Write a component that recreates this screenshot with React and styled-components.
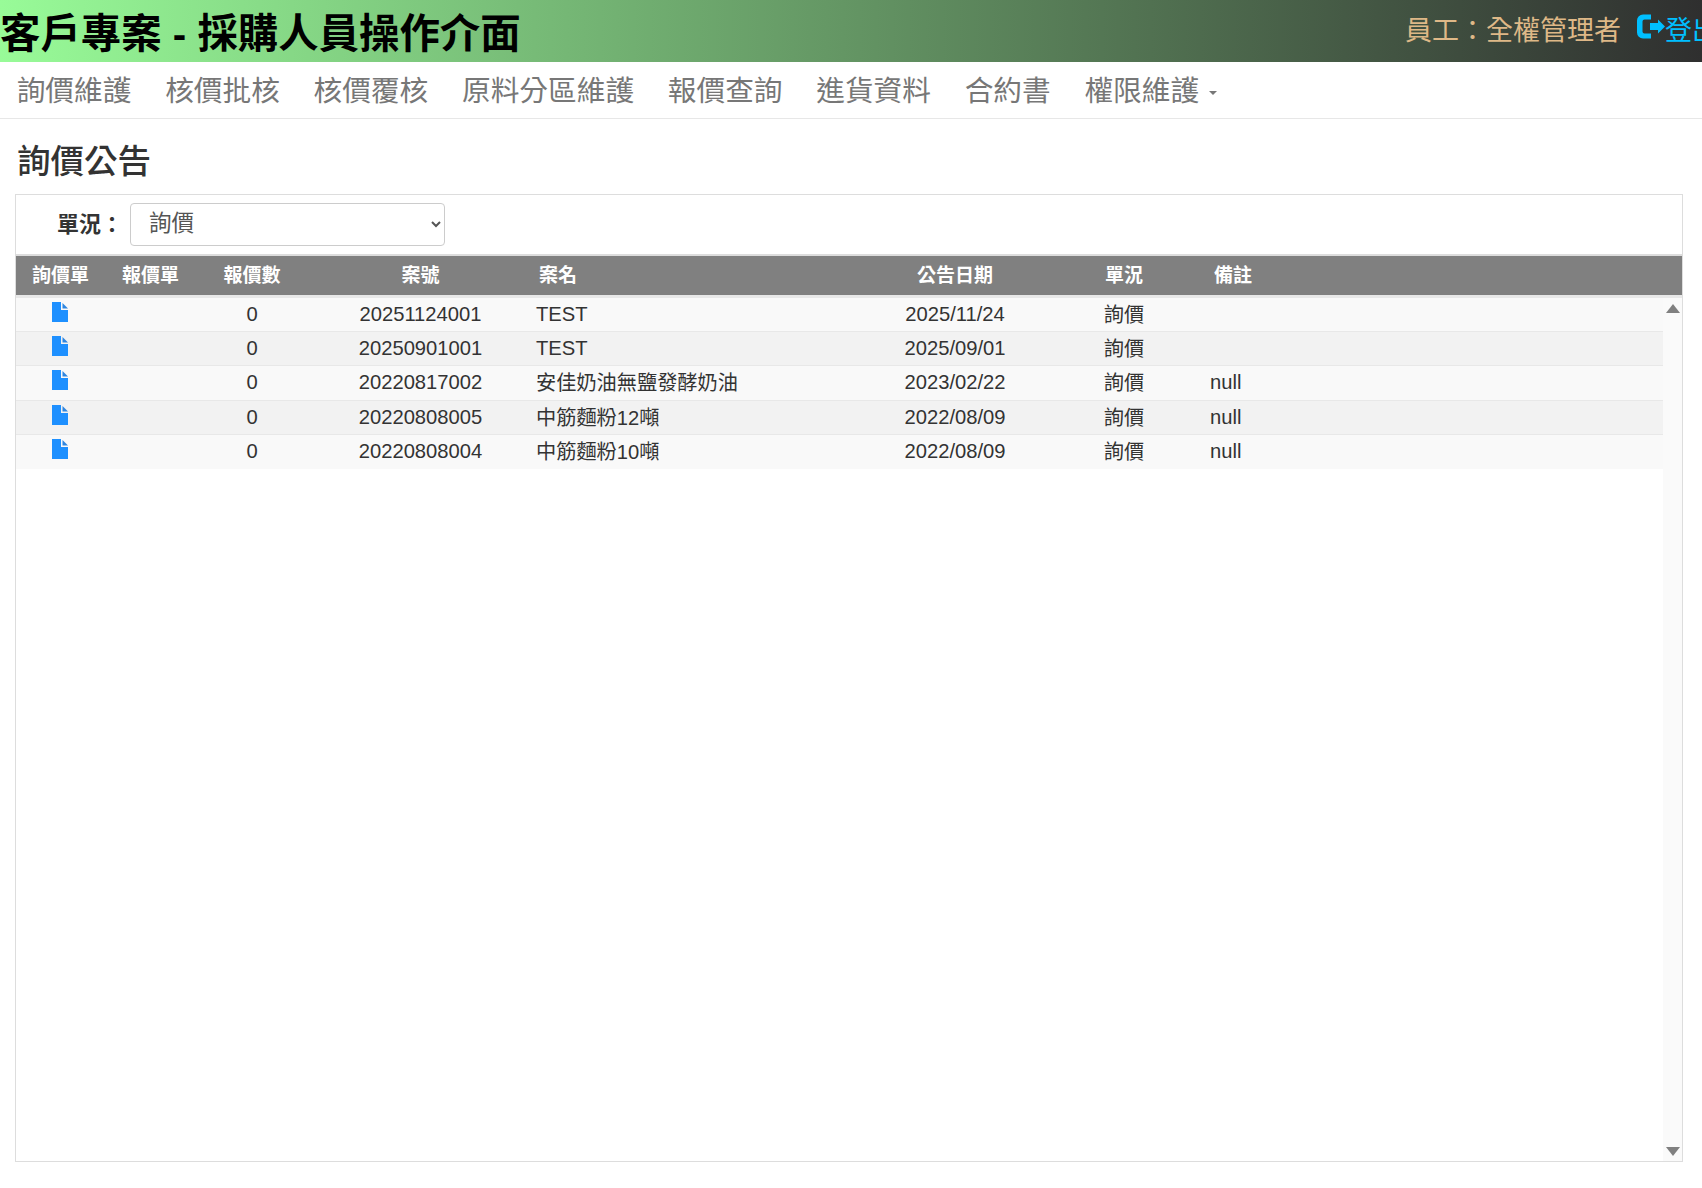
import React from "react";
import styled, { createGlobalStyle } from "styled-components";

const GlobalStyle = createGlobalStyle`
  html, body {
    margin: 0;
    padding: 0;
    height: 100%;
    overflow: hidden;
    background: #fff;
    color: #333;
    font-family: "Liberation Sans", "Noto Sans CJK TC", sans-serif;
  }
`;

const columns = "89px 91px 112px 225px 335px 174px 164px 1fr";

const Header = styled.header`
  display: flex;
  align-items: center;
  height: 62px;
  overflow: hidden;
  background: linear-gradient(to right, palegreen, #2f2f2f);
`;

const Brand = styled.h1`
  flex: 0 0 1405px;
  align-self: flex-start;
  margin: 0;
  font-size: 40.4px;
  font-weight: 700;
  line-height: 68px;
  color: #000;
  white-space: nowrap;
`;

const UserName = styled.span`
  flex: none;
  width: 232px;
  padding-bottom: 6px;
  font-size: 27px;
  color: burlywood;
  white-space: nowrap;
`;

const Logout = styled.a`
  flex: none;
  display: flex;
  align-items: center;
  padding-bottom: 6px;
  font-size: 27px;
  color: deepskyblue;
  white-space: nowrap;

  svg {
    flex: none;
    margin-bottom: 3px;
  }
`;

const Nav = styled.nav`
  display: flex;
  height: 56px;
  border-bottom: 1px solid #e7e7e7;
`;

const NavItem = styled.a`
  display: flex;
  align-items: center;
  padding: 0 17px 4px 16.7px;
  font-size: 28.7px;
  color: #777;
  white-space: nowrap;
`;

const Caret = styled.span`
  width: 0;
  height: 0;
  margin: 10px 0 0 10px;
  border-top: 4px solid #777;
  border-left: 4px solid transparent;
  border-right: 4px solid transparent;
`;

const PageTitle = styled.h2`
  margin: 0;
  padding-left: 17px;
  height: 75px;
  font-size: 33.5px;
  font-weight: 500;
  line-height: 86px;
  color: #333;
`;

const Panel = styled.section`
  display: flex;
  flex-direction: column;
  height: 966px;
  margin: 0 19px 0 15px;
  border: 1px solid #ddd;
`;

const FilterBar = styled.div`
  display: flex;
  align-items: center;
  height: 59px;
  padding-bottom: 1px;
  box-sizing: border-box;
  flex: none;
`;

const FilterLabel = styled.label`
  width: 114px;
  padding: 0 7px 4px 0;
  box-sizing: border-box;
  text-align: right;
  font-size: 22px;
  font-weight: 700;
`;

const Select = styled.select`
  width: 315px;
  height: 43px;
  padding: 0 14px 2px;
  border: 1px solid #ccc;
  border-radius: 4px;
  background: #fff;
  font: inherit;
  font-size: 22.5px;
  color: #555;
`;

const HeadRow = styled.div`
  display: grid;
  grid-template-columns: ${columns};
  flex: none;
  height: 35px;
  padding-bottom: 4px;
  align-items: center;
  background: #808080;
  border-top: 2px solid #ddd;
  border-bottom: 3px solid #e8e8e8;
`;

const HeadCell = styled.div`
  font-size: 19px;
  font-weight: 700;
  color: #fff;
  text-align: ${(p) => (p.$left ? "left" : "center")};
  padding-left: ${(p) => p.$indent || 0}px;
`;

const Body = styled.div`
  display: flex;
  flex: 1;
  min-height: 0;
`;

const Rows = styled.div`
  flex: 1;
  min-width: 0;
`;

const Row = styled.div`
  display: grid;
  grid-template-columns: ${columns};
  height: 34.2px;
  padding-bottom: 2px;
  box-sizing: border-box;
  align-items: center;
  background: ${(p) => (p.$alt ? "#f2f2f2" : "#f9f9f9")};
  border-bottom: ${(p) => (p.$last ? "none" : "1px solid #e8e8e8")};
`;

const Cell = styled.div`
  font-size: 20.2px;
  color: #333;
  white-space: nowrap;
  text-align: ${(p) => (p.$left ? "left" : "center")};
  padding-left: ${(p) => p.$indent || 0}px;
  padding-top: ${(p) => (p.$latin ? 2 : 0)}px;
`;

const FileIconWrap = styled.span`
  display: flex;
  justify-content: center;
  padding-right: 1px;
  margin-top: -3px;
`;

const ScrollTrack = styled.div`
  flex: none;
  width: 19px;
  display: flex;
  flex-direction: column;
  justify-content: space-between;
  align-items: center;
  padding: 6px 0 5px;
  box-sizing: border-box;
  background: #fafafa;
`;

const ScrollArrow = styled.span`
  width: 0;
  height: 0;
  border-left: 7px solid transparent;
  border-right: 7px solid transparent;
  ${(p) => (p.$down ? "border-top: 9px solid #808080;" : "border-bottom: 9px solid #808080;")}
`;

function LogoutIcon() {
  return (
    <svg width="28" height="25" viewBox="0 0 28 25">
      <path
        d="M14 0.5H6a6 6 0 0 0-6 6v12a6 6 0 0 0 6 6h8v-5H7.5a2 2 0 0 1-2-2V7.5a2 2 0 0 1 2-2H14z"
        fill="deepskyblue"
      />
      <path d="M13 9h8V5.5l7 7-7 7V16h-8z" fill="deepskyblue" />
    </svg>
  );
}

function FileIcon() {
  return (
    <svg width="16" height="20" viewBox="0 0 16 20">
      <path d="M0 0h9v8h7v12H0z" fill="dodgerblue" />
      <path d="M10.5 1 16 6.5h-5.5z" fill="#2f86e0" />
    </svg>
  );
}

const menu = ["詢價維護", "核價批核", "核價覆核", "原料分區維護", "報價查詢", "進貨資料", "合約書"];

const inquiries = [
  { no: "20251124001", name: "TEST", date: "2025/11/24", note: "" },
  { no: "20250901001", name: "TEST", date: "2025/09/01", note: "" },
  { no: "20220817002", name: "安佳奶油無鹽發酵奶油", date: "2023/02/22", note: "null" },
  { no: "20220808005", name: "中筋麵粉12噸", date: "2022/08/09", note: "null" },
  { no: "20220808004", name: "中筋麵粉10噸", date: "2022/08/09", note: "null" },
];

export default function App() {
  return (
    <>
      <GlobalStyle />
      <Header>
        <Brand>客戶專案 - 採購人員操作介面</Brand>
        <UserName>員工：全權管理者</UserName>
        <Logout>
          <LogoutIcon />
          登出
        </Logout>
      </Header>
      <Nav>
        {menu.map((item) => (
          <NavItem key={item}>{item}</NavItem>
        ))}
        <NavItem>
          權限維護
          <Caret />
        </NavItem>
      </Nav>
      <PageTitle>詢價公告</PageTitle>
      <Panel>
        <FilterBar>
          <FilterLabel htmlFor="status">單況：</FilterLabel>
          <Select id="status" defaultValue="詢價">
            <option>詢價</option>
            <option>報價</option>
          </Select>
        </FilterBar>
        <HeadRow>
          <HeadCell>詢價單</HeadCell>
          <HeadCell>報價單</HeadCell>
          <HeadCell>報價數</HeadCell>
          <HeadCell>案號</HeadCell>
          <HeadCell $left $indent={6}>案名</HeadCell>
          <HeadCell>公告日期</HeadCell>
          <HeadCell>單況</HeadCell>
          <HeadCell $left $indent={8}>備註</HeadCell>
        </HeadRow>
        <Body>
          <Rows>
            {inquiries.map((row, index) => (
              <Row key={row.no} $alt={index % 2 === 1} $last={index === inquiries.length - 1}>
                <Cell><FileIconWrap><FileIcon /></FileIconWrap></Cell>
                <Cell />
                <Cell $latin>0</Cell>
                <Cell $latin>{row.no}</Cell>
                <Cell $left $indent={3} $latin={row.name === "TEST"}>{row.name}</Cell>
                <Cell $latin>{row.date}</Cell>
                <Cell>詢價</Cell>
                <Cell $left $indent={4} $latin>{row.note}</Cell>
              </Row>
            ))}
          </Rows>
          <ScrollTrack>
            <ScrollArrow />
            <ScrollArrow $down />
          </ScrollTrack>
        </Body>
      </Panel>
    </>
  );
}
